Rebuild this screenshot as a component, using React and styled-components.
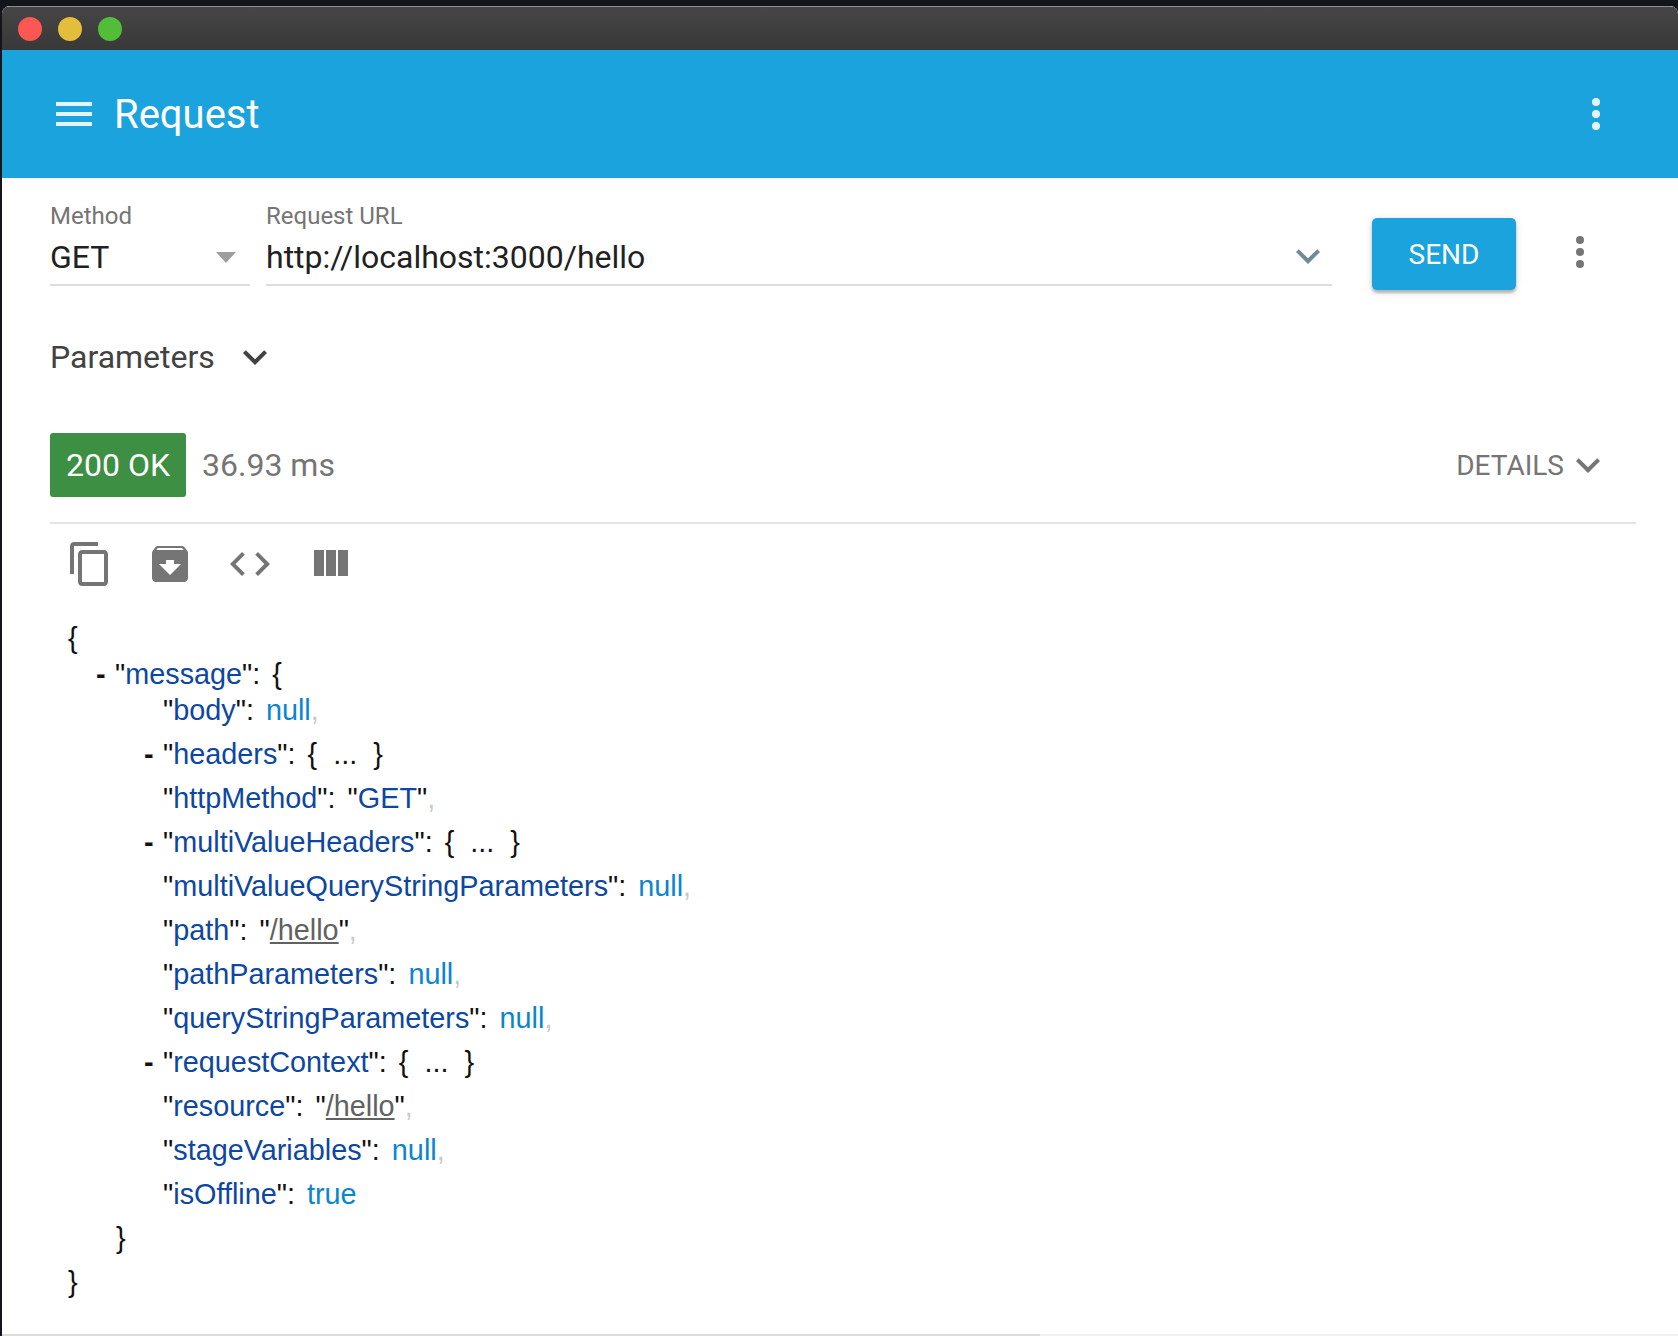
import styled, { createGlobalStyle } from 'styled-components'

const GlobalStyle = createGlobalStyle`
  html, body {
    margin: 0;
    padding: 0;
    background: #13151b;
  }
  * { box-sizing: border-box; }
`

const Frame = styled.div`
  width: 1678px;
  height: 1336px;
  padding: 6px 0 0 2px;
  overflow: hidden;
  background: #13151b;
`
const Window = styled.div`
  display: flex;
  flex-direction: column;
  height: 100%;
  background: #fff;
  border-radius: 8px 8px 0 0;
  overflow: hidden;
  font-family: Roboto, sans-serif;
`
const TitleBar = styled.div`
  display: flex;
  align-items: center;
  gap: 16px;
  height: 44px;
  flex: none;
  padding-left: 16px;
  border-top: 1px solid #8c8c8c;
  background: linear-gradient(#464646, #383838);
`
const Light = styled.span`
  width: 24px;
  height: 24px;
  border-radius: 50%;
  background: ${p => p.$color};
`
const AppBar = styled.header`
  display: flex;
  align-items: center;
  height: 128px;
  flex: none;
  padding: 0 78px 0 54px;
  background: #1ba3dd;
  color: #fff;
`
const Title = styled.h1`
  flex: 1;
  margin: 2px 0 0 22px;
  font-size: 40px;
  font-weight: 400;
  line-height: 44px;
`
const Burger = styled.span`
  display: flex;
  flex-direction: column;
  gap: 6px;
  width: 36px;
  span {
    height: 4px;
    background: #e3f4fb;
  }
`
const RequestRow = styled.div`
  display: flex;
  align-items: flex-start;
  padding: 26px 0 0 48px;
  height: 159px;
  flex: none;
`
const Field = styled.div`
  display: flex;
  flex-direction: column;
  width: ${p => p.$width}px;
  margin-right: 16px;
  height: 82px;
  border-bottom: 2px solid #dedede;
`
const FieldLabel = styled.label`
  font-size: 24px;
  line-height: 24px;
  color: #757575;
`
const FieldValue = styled.div`
  display: flex;
  align-items: center;
  justify-content: space-between;
  height: 50px;
  margin-top: 4px;
  font-size: 32px;
  color: #212121;
`
const Caret = styled.span`
  width: 0;
  height: 0;
  margin-right: 14px;
  border-left: 10px solid transparent;
  border-right: 10px solid transparent;
  border-top: 11px solid #9e9e9e;
`
const UrlChevron = styled.span`
  display: flex;
  margin-right: 12px;
`
const SendButton = styled.button`
  width: 144px;
  height: 72px;
  margin: 14px 0 0 24px;
  border: 0;
  border-radius: 5px;
  background: #1ba3dd;
  color: #fff;
  font-family: inherit;
  font-size: 28px;
  box-shadow: 0 3px 3px rgba(0, 0, 0, 0.25), 0 1px 8px rgba(0, 0, 0, 0.12);
`
const RowMenu = styled.span`
  display: flex;
  margin: 32px 0 0 60px;
`
const ParametersRow = styled.div`
  display: flex;
  align-items: center;
  gap: 28px;
  height: 40px;
  padding-left: 48px;
  flex: none;
  font-size: 32px;
  color: #424242;
  svg { margin-top: 1px; }
`
const StatusRow = styled.div`
  display: flex;
  align-items: center;
  margin: 56px 42px 0 48px;
  padding-bottom: 25px;
  border-bottom: 2px solid #e3e3e3;
  flex: none;
`
const StatusChip = styled.span`
  width: 136px;
  height: 64px;
  display: flex;
  align-items: center;
  justify-content: center;
  border-radius: 3px;
  background: #3d8f43;
  color: #fff;
  font-size: 32px;
`
const Timing = styled.span`
  flex: 1;
  margin-left: 16px;
  font-size: 32px;
  color: #757575;
`
const Details = styled.span`
  display: flex;
  align-items: center;
  gap: 12px;
  margin-right: 36px;
  font-size: 28px;
  color: #757575;
  svg { margin-top: 2px; }
`
const Toolbar = styled.div`
  display: flex;
  gap: 32px;
  padding: 16px 0 0 64px;
  flex: none;
  svg { display: block; fill: #757575; }
`
const Json = styled.div`
  flex: 1;
  padding-top: 32px;
  font-family: "Liberation Sans", Arial, sans-serif;
  font-size: 28.8px;
  word-spacing: 4px;
  color: #111;
`
const Row = styled.div`
  height: ${p => (p.$tall ? 44 : 36)}px;
  padding: ${p => (p.$tall ? 8 : 0)}px 0 0 ${p => p.$indent}px;
  line-height: 36px;
  white-space: nowrap;
`
const Toggle = styled.span`
  display: inline-block;
  width: 19px;
  margin-left: -19px;
  font-weight: 700;
`
const Fold = styled.span`
  word-spacing: 0;
`
const Key = styled.span`
  color: #0d47a1;
`
const Literal = styled.span`
  color: #0a85d1;
`
const Comma = styled.span`
  color: #c9c9c9;
`
const Link = styled.a`
  color: #616161;
  text-decoration: underline;
`
const Scrollbar = styled.div`
  display: flex;
  height: 2px;
  flex: none;
  background: #f0f0f0;
  span {
    width: 1038px;
    background: #dcdcdc;
  }
`

const Chevron = ({ color }) => (
  <svg width="24" height="16" viewBox="6 8.5 12 8" fill={color} aria-hidden="true">
    <path d="M7.41 8.59L12 13.17l4.59-4.58L18 10l-6 6-6-6 1.41-1.41z" />
  </svg>
)

const Dots = ({ color }) => (
  <svg width="8" height="32" viewBox="0 0 8 32" fill={color} aria-hidden="true">
    <circle cx="4" cy="4" r="4" />
    <circle cx="4" cy="16" r="4" />
    <circle cx="4" cy="28" r="4" />
  </svg>
)

const ToolIcon = ({ d }) => (
  <svg width="48" height="48" viewBox="0 0 24 24" aria-hidden="true">
    <path d={d} />
  </svg>
)

const Str = ({ children }) => (
  <>
    "<Key>{children}</Key>"
  </>
)

const Prop = ({ name, children, comma, fold }) => (
  <Row $tall $indent={161}>
    {fold && <Toggle>-</Toggle>}
    <Str>{name}</Str>: {fold ? <Fold>{'{'}&nbsp; ... &nbsp;{'}'}</Fold> : children}
    {comma && <Comma>,</Comma>}
  </Row>
)

const App = () => {
  return (
    <Frame>
      <GlobalStyle />
      <Window>
        <TitleBar>
          <Light $color="#fc5753" />
          <Light $color="#e5bd3d" />
          <Light $color="#53bd3a" />
        </TitleBar>
        <AppBar>
          <Burger><span /><span /><span /></Burger>
          <Title>Request</Title>
          <Dots color="#e3f4fb" />
        </AppBar>
        <RequestRow>
          <Field $width={200}>
            <FieldLabel>Method</FieldLabel>
            <FieldValue>GET<Caret /></FieldValue>
          </Field>
          <Field $width={1066}>
            <FieldLabel>Request URL</FieldLabel>
            <FieldValue>
              http://localhost:3000/hello
              <UrlChevron><Chevron color="#6f8a9b" /></UrlChevron>
            </FieldValue>
          </Field>
          <SendButton>SEND</SendButton>
          <RowMenu><Dots color="#757575" /></RowMenu>
        </RequestRow>
        <ParametersRow>
          Parameters
          <Chevron color="#424242" />
        </ParametersRow>
        <StatusRow>
          <StatusChip>200 OK</StatusChip>
          <Timing>36.93 ms</Timing>
          <Details>DETAILS <Chevron color="#757575" /></Details>
        </StatusRow>
        <Toolbar>
          <ToolIcon d="M16 1H4c-1.1 0-2 .9-2 2v14h2V3h12V1zm3 4H8c-1.1 0-2 .9-2 2v14c0 1.1.9 2 2 2h11c1.1 0 2-.9 2-2V7c0-1.1-.9-2-2-2zm0 16H8V7h11v14z" />
          <ToolIcon d="M20.54 5.23l-1.39-1.68C18.88 3.21 18.47 3 18 3H6c-.47 0-.88.21-1.16.55L3.46 5.23C3.17 5.57 3 6.02 3 6.5V19c0 1.1.9 2 2 2h14c1.1 0 2-.9 2-2V6.5c0-.48-.17-.93-.46-1.27zM12 17.5L6.5 12H10v-2h4v2h3.5L12 17.5zM5.12 5l.81-1h12l.94 1H5.12z" />
          <ToolIcon d="M9.4 16.6L4.8 12l4.6-4.6L8 6l-6 6 6 6 1.4-1.4zm5.2 0l4.6-4.6-4.6-4.6L16 6l6 6-6 6-1.4-1.4z" />
          <ToolIcon d="M10 18h5V5h-5v13zm-6 0h5V5H4v13zM16 5v13h5V5h-5z" />
        </Toolbar>
        <Json>
          <Row $indent={66}>{'{'}</Row>
          <Row $indent={113}><Toggle>-</Toggle><Str>message</Str>: {'{'}</Row>
          <Row $indent={161}><Str>body</Str>: <Literal>null</Literal><Comma>,</Comma></Row>
          <Prop name="headers" fold />
          <Prop name="httpMethod" comma><Str>GET</Str></Prop>
          <Prop name="multiValueHeaders" fold />
          <Prop name="multiValueQueryStringParameters" comma><Literal>null</Literal></Prop>
          <Prop name="path" comma>"<Link>/hello</Link>"</Prop>
          <Prop name="pathParameters" comma><Literal>null</Literal></Prop>
          <Prop name="queryStringParameters" comma><Literal>null</Literal></Prop>
          <Prop name="requestContext" fold />
          <Prop name="resource" comma>"<Link>/hello</Link>"</Prop>
          <Prop name="stageVariables" comma><Literal>null</Literal></Prop>
          <Prop name="isOffline"><Literal>true</Literal></Prop>
          <Row $tall $indent={114}>{'}'}</Row>
          <Row $tall $indent={66}>{'}'}</Row>
        </Json>
        <Scrollbar><span /></Scrollbar>
      </Window>
    </Frame>
  )
}

export default App
